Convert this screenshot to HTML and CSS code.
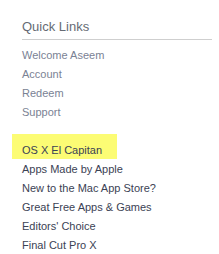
FILE: index.html
```html
<!DOCTYPE html>
<html>
<head>
<meta charset="utf-8">
<link rel="stylesheet" href="styles.css">
</head>
<body>
<div class="panel">
  <div class="title">Quick Links</div>
  <ul class="links top">
    <li>Welcome Aseem</li>
    <li>Account</li>
    <li>Redeem</li>
    <li>Support</li>
  </ul>
  <ul class="links bottom">
    <li class="hl">OS X El Capitan</li>
    <li>Apps Made by Apple</li>
    <li>New to the Mac App Store?</li>
    <li>Great Free Apps &amp; Games</li>
    <li>Editors' Choice</li>
    <li>Final Cut Pro X</li>
  </ul>
</div>
</body>
</html>
```
FILE: styles.css
```css
html, body {
  margin: 0;
  padding: 0;
  background: #ffffff;
}
body {
  font-family: "Liberation Sans", Arial, sans-serif;
  width: 219px;
  height: 254px;
  overflow: hidden;
}
.panel {
  padding: 19px 7px 0 22px;
}
.title {
  font-size: 13px;
  line-height: 16px;
  color: #666b74;
  padding-bottom: 4px;
  border-bottom: 1px solid #cfcfcf;
}
.links {
  list-style: none;
  margin: 0;
  padding: 0;
}
.links li {
  font-size: 11px;
  line-height: 19px;
}
.top {
  margin-top: 6px;
}
.top li {
  color: #7a8294;
}
.bottom {
  margin-top: 12px;
}
.bottom li {
  color: #3b4254;
}
.bottom li.hl {
  background: #fcfc74;
  margin-left: -10px;
  padding-left: 10px;
  width: 95px;
  padding-top: 8px;
  line-height: 17px;
  margin-bottom: 1px;
}
```
